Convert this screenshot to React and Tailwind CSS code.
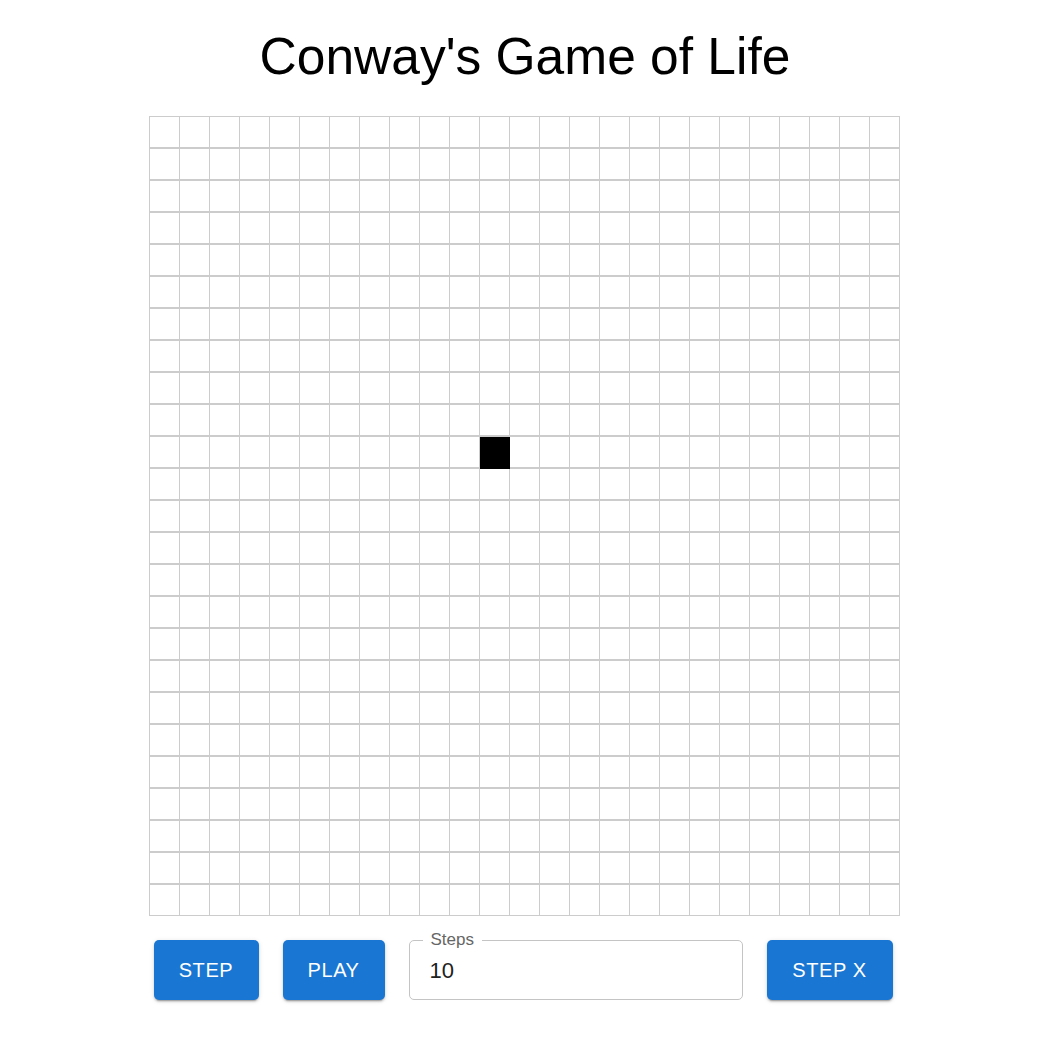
import React, { useState } from "react";

const SIZE = 25;

export default function App() {
  const [cells, setCells] = useState(() => {
    const g = Array.from({ length: SIZE }, () => Array(SIZE).fill(false));
    g[10][11] = true;
    return g;
  });
  const [steps, setSteps] = useState("10");

  const toggle = (r, c) => {
    setCells((prev) =>
      prev.map((row, ri) => (ri === r ? row.map((v, ci) => (ci === c ? !v : v)) : row))
    );
  };

  const btn =
    "h-[60px] rounded-[5px] bg-[#1976d2] text-white text-[20px] tracking-[0.03em] uppercase shadow-[0_3px_1px_-2px_rgba(0,0,0,0.2),0_2px_2px_0_rgba(0,0,0,0.14),0_1px_5px_0_rgba(0,0,0,0.12)] hover:bg-[#1565c0]";

  return (
    <div className="min-h-screen bg-white flex flex-col items-center font-['Liberation_Sans',Arial,sans-serif]">
      {/* Title */}
      <h1 className="pt-[27px] mb-[31px] text-[51.5px] leading-[58px] text-black">
        Conway's Game of Life
      </h1>

      {/* Board */}
      <div className="border-t border-l border-[#cccccc] ml-[-1px]">
        {cells.map((row, r) => (
          <div key={r} className="flex">
            {row.map((alive, c) => (
              <div
                key={c}
                onClick={() => toggle(r, c)}
                className={`w-[30px] border-r ${
                  r === SIZE - 1 ? "h-[31px] border-b" : "h-[32px] border-b-2"
                } ${alive ? "bg-black border-black" : "bg-white border-[#cccccc]"}`}
              />
            ))}
          </div>
        ))}
      </div>

      {/* Controls */}
      <div className="mt-[24px] flex items-center gap-[24px] ml-[-4px]">
        <button className={`${btn} w-[105px]`}>Step</button>
        <button className={`${btn} w-[102px]`}>Play</button>
        <div className="relative w-[334px] h-[60px] rounded-[5px] border border-[#c4c4c4]">
          <span className="absolute left-[13px] top-[-12px] bg-white px-[8px] text-[17px] leading-[22px] text-[#666666]">
            Steps
          </span>
          <input
            value={steps}
            onChange={(e) => setSteps(e.target.value)}
            className="w-full h-full pl-[20px] pt-[2px] text-[22px] text-[#212121] outline-none bg-transparent"
          />
        </div>
        <button className={`${btn} w-[126px]`}>Step X</button>
      </div>
    </div>
  );
}
